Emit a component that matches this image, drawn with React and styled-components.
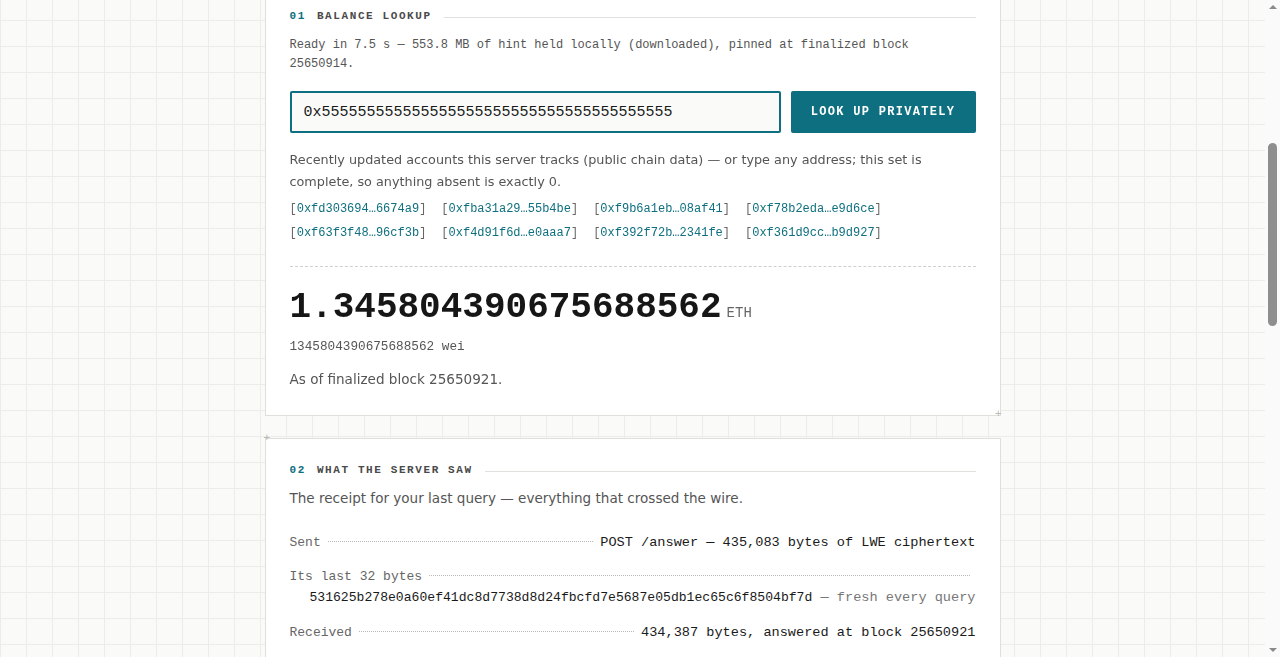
import React from "react";
import styled, { createGlobalStyle } from "styled-components";

const mono = `"Liberation Mono", "DejaVu Sans Mono", monospace`;
const sans = `"DejaVu Sans", "Noto Sans", sans-serif`;
const teal = "#0d6f7f";

const GlobalStyle = createGlobalStyle`
  html, body { height: 100%; }
  body {
    margin: 0;
    overflow: hidden;
    font-family: ${sans};
    color: #1a1a1a;
  }
`;

const Frame = styled.div`
  display: flex;
  height: 100vh;
`;

const Viewport = styled.div`
  flex: 1;
  min-width: 0;
  overflow: hidden;
  background-color: #fafaf8;
  background-image:
    linear-gradient(to right, #ececea 1px, transparent 1px),
    linear-gradient(to bottom, #ececea 1px, transparent 1px);
  background-size: 26px 26px;
  background-position: 0 -6px;
`;

const ScrollTrack = styled.div`
  width: 15px;
  flex-shrink: 0;
  display: flex;
  flex-direction: column;
  align-items: center;
  background: #fafafa;
`;

const Arrow = styled.span`
  width: 0;
  height: 0;
  border-left: 4px solid transparent;
  border-right: 4px solid transparent;
  ${p =>
    p.$down
      ? "border-top: 4px solid #8a8a8a; margin-top: auto; margin-bottom: 5px;"
      : "border-bottom: 4px solid #8a8a8a; margin-top: 5px;"}
`;

const Thumb = styled.span`
  width: 9px;
  height: 183px;
  margin-top: 134px;
  border-radius: 5px;
  background: #8e8e8e;
`;

const Page = styled.main`
  max-width: 736px;
  margin: 0 auto;
  display: flex;
  flex-direction: column;
  gap: 22px;
  padding-bottom: 120px;
`;

const Card = styled.section`
  position: relative;
  background: #fff;
  border: 1px solid #dfdfdb;
  border-top: ${p => (p.$clipped ? "none" : "1px solid #dfdfdb")};
  padding: ${p => (p.$clipped ? "9px" : "24px")} 24px 25px;
`;

const Cross = styled.span`
  position: absolute;
  font-family: ${mono};
  font-size: 11px;
  line-height: 1;
  color: #b8b8b4;
  ${p => (p.$corner === "br" ? "right: -2px; bottom: -5px;" : "left: -2px; top: -6px;")}
`;

const Header = styled.div`
  display: flex;
  align-items: center;
  gap: 12px;
  height: 14px;
  font-family: ${mono};
  font-size: 11px;
  font-weight: bold;
  letter-spacing: 1.6px;
  text-transform: uppercase;
  color: #4a4a4a;

  &::after {
    content: "";
    flex: 1;
    height: 1px;
    background: #e0e0dc;
    margin-top: 2px;
  }
`;

const Num = styled.span`
  color: ${teal};
  margin-right: -1px;
`;

const Note = styled.p`
  margin: ${p => p.$mt || 0}px 0 0;
  font-family: ${mono};
  font-size: 12px;
  line-height: 19px;
  color: #555;
`;

const Prose = styled.p`
  margin: ${p => p.$mt || 0}px 0 0;
  font-family: ${sans};
  font-size: ${p => p.$size || 12.8}px;
  line-height: 22px;
  color: #555;
`;

const SearchRow = styled.form`
  display: flex;
  gap: 10px;
  margin-top: 17px;
`;

const AddressInput = styled.input`
  flex: 1;
  min-width: 0;
  height: 42px;
  box-sizing: border-box;
  border: 2px solid ${teal};
  border-radius: 2px;
  background: #fafaf8;
  padding: 0 12px;
  font-family: ${mono};
  font-size: 15px;
  color: #1a1a1a;
  caret-color: ${teal};
  outline: none;
`;

const LookupButton = styled.button`
  width: 185px;
  height: 42px;
  border: none;
  border-radius: 2px;
  background: ${teal};
  color: #fff;
  font-family: ${mono};
  font-size: 12px;
  font-weight: bold;
  letter-spacing: 1.3px;
  cursor: pointer;
`;

const Chips = styled.div`
  display: flex;
  flex-wrap: wrap;
  column-gap: 15px;
  margin-top: 4px;
  font-family: ${mono};
  font-size: 12px;
  line-height: 24px;
  color: #666;
`;

const Chip = styled.span`
  white-space: nowrap;
  & > a {
    color: ${teal};
    text-decoration: none;
  }
`;

const Divider = styled.hr`
  border: none;
  border-top: 1px dashed #cfcfcb;
  margin: 21px 0 0;
`;

const Amount = styled.div`
  display: flex;
  align-items: baseline;
  gap: 5px;
  margin-top: 21px;
  font-family: ${mono};
`;

const Big = styled.span`
  font-size: 36px;
  font-weight: bold;
  line-height: 40px;
  color: #161616;
`;

const Unit = styled.span`
  font-size: 14px;
  color: #666;
`;

const Wei = styled.div`
  margin-top: 10px;
  font-family: ${mono};
  font-size: 12.7px;
  line-height: 18px;
  color: #555;
`;

const Rows = styled.div`
  display: flex;
  flex-direction: column;
  gap: 13px;
  margin-top: 23px;
`;

const Row = styled.div`
  display: flex;
  align-items: baseline;
  gap: 7px;
  padding-right: ${p => (p.$inset ? 6 : 0)}px;
  font-family: ${mono};
  font-size: 13px;
  line-height: 21px;
`;

const Label = styled.span`
  color: #666;
`;

const Leader = styled.span`
  flex: 1;
  border-bottom: 1px dotted #b8b8b4;
  transform: translateY(-4px);
`;

const Value = styled.span`
  font-size: 13.6px;
  color: #1a1a1a;
  white-space: nowrap;
`;

const Block = styled.div`
  display: flex;
  flex-direction: column;
  padding-bottom: 1px;
`;

const Hash = styled.div`
  padding-left: 18px;
  font-family: ${mono};
  font-size: 13.6px;
  line-height: 21px;
  color: #1a1a1a;
  text-align: right;
  white-space: nowrap;
`;

const HashDigits = styled.span`
  font-size: 13.1px;
`;

const Faint = styled.span`
  color: #777;
`;

const accounts = [
  "0xfd303694…6674a9",
  "0xfba31a29…55b4be",
  "0xf9b6a1eb…08af41",
  "0xf78b2eda…e9d6ce",
  "0xf63f3f48…96cf3b",
  "0xf4d91f6d…e0aaa7",
  "0xf392f72b…2341fe",
  "0xf361d9cc…b9d927",
];

export default function App() {
  return (
    <>
      <GlobalStyle />
      <Frame>
        <Viewport>
          <Page>
            <Card $clipped>
              <Header>
                <Num>01</Num>Balance lookup
              </Header>
              <Note $mt={13}>
                Ready in 7.5 s — 553.8 MB of hint held locally (downloaded), pinned at finalized block
                25650914.
              </Note>
              <SearchRow onSubmit={e => e.preventDefault()}>
                <AddressInput
                  defaultValue={"0x" + "5".repeat(39)}
                  spellCheck={false}
                  autoFocus
                />
                <LookupButton type="submit">LOOK UP PRIVATELY</LookupButton>
              </SearchRow>
              <Prose $mt={16}>
                Recently updated accounts this server tracks (public chain data) — or type any address; this set is
                complete, so anything absent is exactly 0.
              </Prose>
              <Chips>
                {accounts.map(a => (
                  <Chip key={a}>
                    [<a href="#">{a}</a>]
                  </Chip>
                ))}
              </Chips>
              <Divider />
              <Amount>
                <Big>1.345804390675688562</Big>
                <Unit>ETH</Unit>
              </Amount>
              <Wei>1345804390675688562 wei</Wei>
              <Prose $mt={12} $size={13.55}>As of finalized block 25650921.</Prose>
              <Cross $corner="br">+</Cross>
            </Card>

            <Card>
              <Cross $corner="tl">+</Cross>
              <Header>
                <Num>02</Num>What the server saw
              </Header>
              <Prose $mt={10} $size={13.55}>
                The receipt for your last query — everything that crossed the wire.
              </Prose>
              <Rows>
                <Row>
                  <Label>Sent</Label>
                  <Leader />
                  <Value>POST /answer — 435,083 bytes of LWE ciphertext</Value>
                </Row>
                <Block>
                  <Row $inset>
                    <Label>Its last 32 bytes</Label>
                    <Leader />
                  </Row>
                  <Hash>
                    <HashDigits>531625b278e0a60ef41dc8d7738d8d24fbcfd7e5687e05db1ec65c6f8504bf7d</HashDigits>{" "}
                    <Faint>— fresh every query</Faint>
                  </Hash>
                </Block>
                <Row>
                  <Label>Received</Label>
                  <Leader />
                  <Value>434,387 bytes, answered at block 25650921</Value>
                </Row>
              </Rows>
            </Card>
          </Page>
        </Viewport>
        <ScrollTrack aria-hidden="true">
          <Arrow />
          <Thumb />
          <Arrow $down />
        </ScrollTrack>
      </Frame>
    </>
  );
}
